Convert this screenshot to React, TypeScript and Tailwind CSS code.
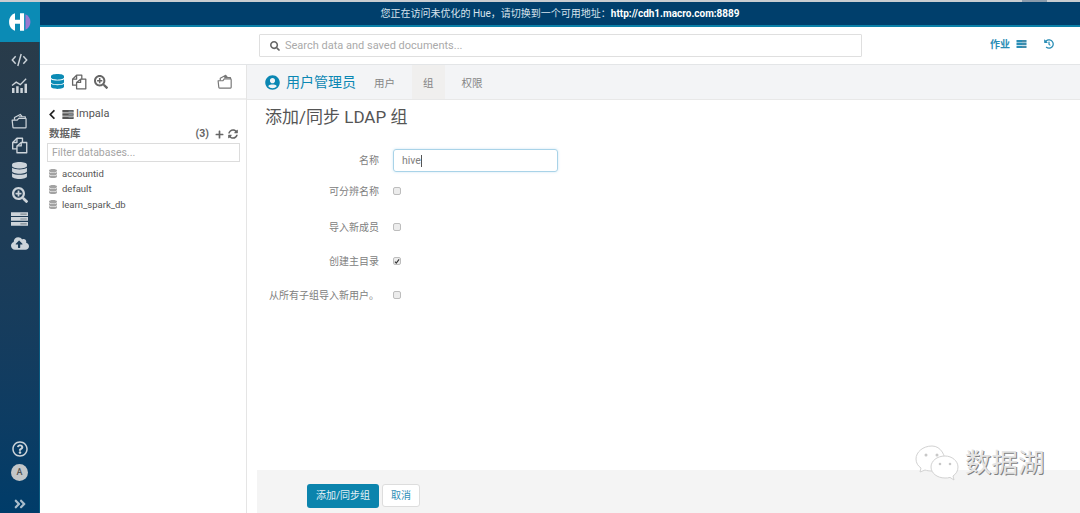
import React from "react";
import {
  FaDatabase, FaSearchPlus, FaCloudUploadAlt, FaRegQuestionCircle, FaAngleDoubleRight,
  FaChevronLeft, FaPlus, FaSyncAlt, FaUserCircle, FaSearch, FaHistory,
} from "react-icons/fa";

const font = "font-['Roboto','Noto_Sans_CJK_SC',sans-serif]";

function Code({ className = "" }: { className?: string }) {
  return (
    <svg viewBox="0 0 20 16" className={className} fill="none" stroke="currentColor" strokeWidth="1.700">
      <path d="M5.500 3.500L1.500 8l4 4.500M14.500 3.500l4 4.500-4 4.500M12 1L8 15" />
    </svg>
  );
}
function Files({ className = "" }: { className?: string }) {
  return (
    <svg viewBox="0 0 20 20" className={className} fill="none" stroke="currentColor" strokeWidth="1.600" strokeLinejoin="round">
      <path d="M13.500 6.500V1.500H7L2 6.500V14h5" />
      <path d="M2 6.500h5v-5" />
      <path d="M18.500 6.500H12L7 10.500v8h11.500z" />
      <path d="M7 10.500h5V6.500" />
    </svg>
  );
}
function Folder({ className = "" }: { className?: string }) {
  return (
    <svg viewBox="0 0 22 20" className={className} fill="none" stroke="currentColor" strokeWidth="1.600" strokeLinejoin="round">
      <path d="M1.500 9l1 9a1 1 0 0 0 1 1h15a1 1 0 0 0 1-1V7.500a1 1 0 0 0-1-1H10L8 9z" />
      <path d="M4.500 8.500V5.500L12 1.500l2.500 3" />
      <path d="M10 4.500h8.500v2" />
    </svg>
  );
}
function Server({ className = "" }: { className?: string }) {
  return (
    <svg viewBox="0 0 20 16" className={className} fill="currentColor">
      <path d="M0 0h20v4.500H0zM0 5.700h20v4.500H0zM0 11.500h20V16H0z" />
      <path d="M11 1.500h7.500v1.400H11zM11 7.300h7.500v1.400H11zM11 13h7.500v1.400H11z" fill="#7f8a93" />
    </svg>
  );
}
function Chart({ className = "" }: { className?: string }) {
  return (
    <svg viewBox="0 0 20 18" className={className} fill="currentColor">
      <path d="M1 12h3v6H1zM6 10h3v8H6zM11 12h3v6h-3zM16 7h3v11h-3z" />
      <path d="M1 9l5-4 5 3 7-7" fill="none" stroke="currentColor" strokeWidth="1.600" />
    </svg>
  );
}
function Logo() {
  return (
    <svg viewBox="0 0 26 22" className="w-[24px] h-[20px]">
      <path d="M1 11C1 6 4 2.500 7.500 1.500V8.500h5.500V1.500h4.500v19H13V13H7.500v7.500C4 19.500 1 16 1 11z" fill="#fff" />
      <path d="M19 2.500c3.500 1.500 5.500 5 5.500 8.500s-2 7-5.500 8.500z" fill="#9a78cf" />
    </svg>
  );
}
function DbList() {
  return <FaDatabase className="w-[8px] h-[9px] text-[#a3a3a3]" />;
}
function Check({ label, checked, mt }: { label: string; checked?: boolean; mt: string }) {
  return (
    <label className={`flex items-center h-[14px] ${mt}`}>
      <span className="w-[132px] shrink-0 text-right text-[10px] text-[#808080]">{label}</span>
      <span className="ml-[14px] w-[8px] h-[8px] rounded-[2px] border border-[#bdbdbd] bg-[#ececec] flex items-center justify-center">
        {checked && (
          <svg viewBox="0 0 8 8" className="w-[7px] h-[7px]">
            <path d="M1.200 4.200l1.800 2L6.800 1.200" fill="none" stroke="#333" strokeWidth="1.500" />
          </svg>
        )}
      </span>
    </label>
  );
}

export default function App() {
  return (
    <div className={`${font} w-[1080px] h-[513px] overflow-hidden relative flex flex-col bg-white`}>
      <div className="h-[2px] bg-[#c9cdd1] shrink-0 flex justify-end pr-[33px]">
        <div className="w-[25px] bg-[#8a9bab]" />
      </div>
      <div className="flex flex-1 min-h-0">
        <aside className="w-[40px] shrink-0 flex flex-col items-center bg-gradient-to-b from-[#2b3b47] to-[#003c69] text-[#cdd4da] border-r border-[#0a5a80]">
          <div className="w-[40px] h-[40px] bg-[#0b8bb5] flex items-center justify-center shrink-0">
            <Logo />
          </div>
          <Code className="w-[17px] h-[14px] mt-[11px]" />
          <Chart className="w-[17px] h-[15px] mt-[11px]" />
          <Folder className="w-[17px] h-[16px] mt-[20px]" />
          <Files className="w-[17px] h-[17px] mt-[8px]" />
          <FaDatabase className="w-[15px] h-[17px] mt-[8px]" />
          <FaSearchPlus className="w-[16px] h-[16px] mt-[8px]" />
          <Server className="w-[17px] h-[14px] mt-[9px]" />
          <FaCloudUploadAlt className="w-[18px] h-[15px] mt-[10px]" />
          <FaRegQuestionCircle className="w-[16px] h-[16px] mt-auto" />
          <div className="w-[17px] h-[17px] rounded-full bg-[#c3c6c8] text-[#555] text-[9px] font-medium flex items-center justify-center mt-[7px]">A</div>
          <FaAngleDoubleRight className="w-[14px] h-[14px] mt-[16px] mb-[2px] text-[#a9bccb]" />
        </aside>

        <div className="flex-1 min-w-0 flex flex-col">
          <div className="h-[25px] shrink-0 bg-[#003f6c] border-b-2 border-[#0b80a8] flex items-center justify-center text-[10px] text-[#d7e3ec]">
            <span>您正在访问未优化的 Hue，请切换到一个可用地址：</span>
            <a className="font-bold text-white">http://cdh1.macro.com:8889</a>
          </div>

          <div className="h-[38px] shrink-0 border-b border-[#e3e5e7] flex items-center pl-[219px] pr-[26px]">
            <div className="w-[603px] h-[23px] border border-[#dfdfdf] rounded-[1px] flex items-center pl-[10px] pt-[1px] gap-[5px] text-[#aaa] text-[11px]">
              <FaSearch className="w-[10px] h-[10px] text-[#666]" />
              <span>Search data and saved documents...</span>
            </div>
            <div className="ml-auto mb-[3px] flex items-center text-[#2a8db5] text-[10px] font-bold">
              <span>作业</span>
              <Server className="w-[11px] h-[8px] ml-[6px]" />
              <FaHistory className="w-[10px] h-[10px] ml-[17px]" />
            </div>
          </div>

          <div className="flex flex-1 min-h-0">
            <div className="w-[207px] shrink-0 border-r border-[#e5e5e5] flex flex-col">
              <div className="h-[35px] shrink-0 border-b-2 border-[#eeeeee] flex items-center pl-[11px] pr-[13px]">
                <FaDatabase className="w-[13px] h-[15px] text-[#0b8bb5]" />
                <Files className="w-[16px] h-[16px] ml-[7px] text-[#666]" />
                <FaSearchPlus className="w-[14px] h-[14px] ml-[7px] text-[#666]" />
                <Folder className="w-[16px] h-[15px] ml-auto text-[#777]" />
              </div>
              <div className="flex items-center mt-[7px] pl-[8px] h-[14px] text-[11px] text-[#555]">
                <FaChevronLeft className="w-[8px] h-[11px] text-[#222]" />
                <Server className="w-[12px] h-[9px] ml-[6px] text-[#555]" />
                <span className="ml-[2px]">Impala</span>
              </div>
              <div className="flex items-center mt-[6px] pl-[9px] pr-[8px] h-[14px] text-[10.500px] font-bold text-[#666]">
                <span>数据库</span>
                <span className="ml-auto">(3)</span>
                <FaPlus className="w-[9px] h-[9px] ml-[6px]" />
                <FaSyncAlt className="w-[10px] h-[10px] ml-[4px]" />
              </div>
              <div className="ml-[7px] mr-[6px] mt-[2px] h-[19px] border border-[#dcdcdc] flex items-center pl-[4px] text-[10.500px] text-[#a5a5a5]">
                Filter databases...
              </div>
              <ul className="mt-[4px] pl-[9px] text-[9.500px] text-[#555]">
                {["accountid", "default", "learn_spark_db"].map((d) => (
                  <li key={d} className="flex items-center gap-[5px] h-[15.500px]">
                    <DbList />
                    <span>{d}</span>
                  </li>
                ))}
              </ul>
            </div>

            <div className="flex-1 min-w-0 flex flex-col">
              <div className="h-[35px] shrink-0 bg-[#f3f4f6] border-b border-[#e8e8e8] flex items-stretch pl-[18px] text-[10.500px] text-[#858585]">
                <div className="flex items-center pt-[1px] text-[#0b87b3] text-[14px]">
                  <FaUserCircle className="w-[15px] h-[15px] mr-[6px]" />
                  <span>用户管理员</span>
                </div>
                <span className="flex items-center pt-[3px] ml-[18px]">用户</span>
                <span className="flex items-center pt-[3px] ml-[17px] px-[11px] bg-[#f0efee]">组</span>
                <span className="flex items-center pt-[3px] ml-[17px]">权限</span>
              </div>
              <h1 className="mt-[6px] ml-[18px] h-[22px] leading-[22px] text-[17px] text-[#555] font-normal">添加/同步 LDAP 组</h1>
              <form className="flex-1 flex flex-col min-h-0">
                <div className="flex items-center mt-[21px]">
                  <span className="w-[132px] shrink-0 text-right text-[10px] text-[#808080]">名称</span>
                  <div className="ml-[14px] w-[165px] h-[23px] rounded-[3px] border border-[#a9d3e8] shadow-[0_0_3px_#cfe6f3] flex items-center pl-[8px] text-[10.500px] text-[#808080]">
                    hive<span className="w-px h-[12px] bg-[#555]" />
                  </div>
                </div>
                <Check label="可分辨名称" mt="mt-[12px]" />
                <Check label="导入新成员" mt="mt-[22px]" />
                <Check label="创建主目录" checked mt="mt-[20px]" />
                <Check label="从所有子组导入新用户。" mt="mt-[20px]" />
                <div className="mt-auto ml-[10px] h-[43px] bg-[#f4f4f4] flex items-center pl-[50px] gap-[3px] text-[10px] shrink-0 pt-[8px]">
                  <button type="button" className="w-[72px] h-[24px] rounded-[3px] bg-[#0b84ad] text-[#e3f1f6]">添加/同步组</button>
                  <button type="button" className="w-[38px] h-[23px] rounded-[3px] bg-white border border-[#ddd] text-[#2f8fb8]">取消</button>
                </div>
              </form>
            </div>
          </div>
        </div>
      </div>

      <div className="absolute left-[914px] top-[444px] flex items-center">
        <svg viewBox="0 0 46 38" className="w-[46px] h-[38px]" fill="#ffffff" stroke="#d2d2d2" strokeWidth="1">
          <path d="M18 2C9 2 2 8 2 15c0 4 2 7 5 9l-1 4 5-2c2 .6 4 1 7 1 6 0 11-3 13-7 1-8-4-18-13-18z" />
          <path d="M31 12c-8 0-14 5-14 11s6 11 14 11c2 0 3 0 5-.6l4 2.600-1-4c3-2 5-5 5-9 0-6-6-11-13-11z" />
          <g fill="#c8c8c8" stroke="none">
            <circle cx="12" cy="11" r="1.500" /><circle cx="23" cy="11" r="1.500" />
            <circle cx="26" cy="20" r="1.300" /><circle cx="36" cy="20" r="1.300" />
          </g>
        </svg>
        <span className="ml-[5px] text-[26.500px] leading-none text-[#e4e4e4] [text-shadow:1px_1px_0_#808080]">数据湖</span>
      </div>
    </div>
  );
}
